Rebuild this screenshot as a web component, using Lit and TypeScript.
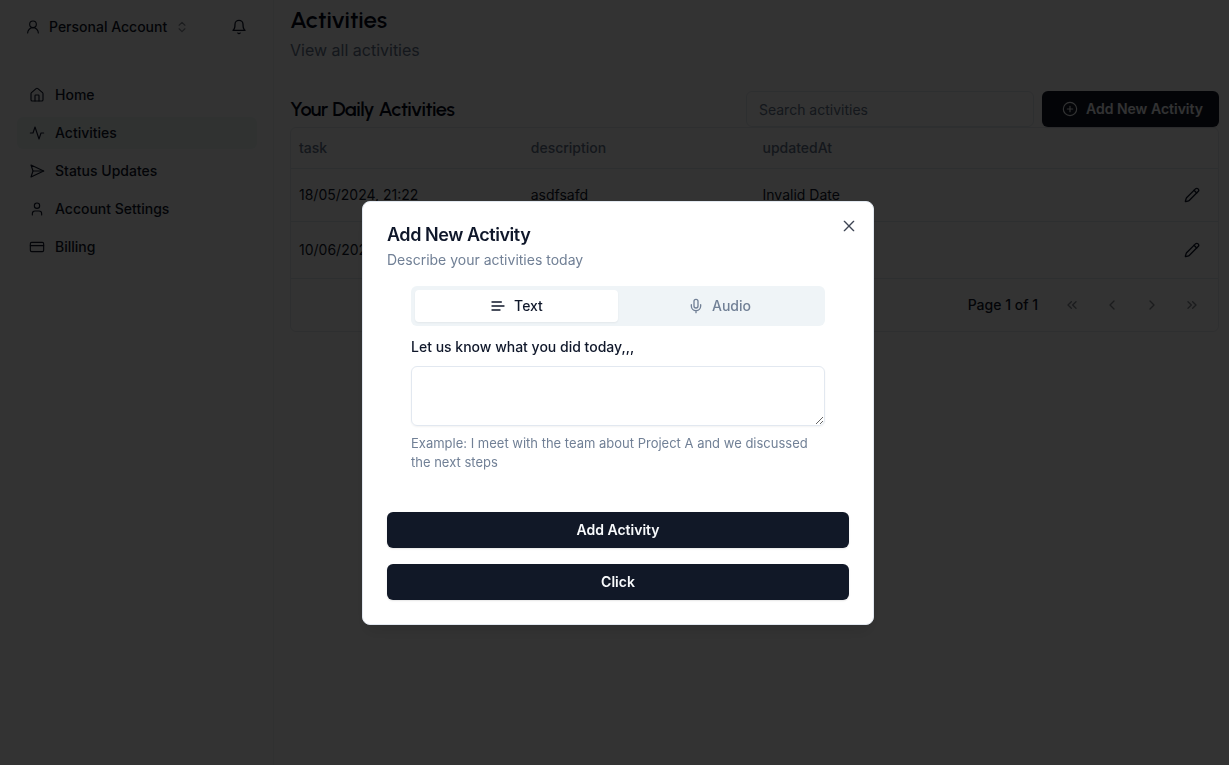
import { LitElement, html, css, svg } from "lit";
import { customElement, state } from "lit/decorators.js";

const icons = {
  account: svg`<circle cx="12" cy="8" r="5"/><path d="M20 21a8 8 0 0 0-16 0"/>`,
  sort: svg`<path d="m7 9 5-5 5 5M7 15l5 5 5-5"/>`,
  bell: svg`<path d="M6 8a6 6 0 0 1 12 0c0 7 3 9 3 9H3s3-2 3-9"/><path d="M10.3 21a1.94 1.94 0 0 0 3.4 0"/>`,
  home: svg`<path d="M15 21v-8a1 1 0 0 0-1-1h-4a1 1 0 0 0-1 1v8"/><path d="M3 10a2 2 0 0 1 .709-1.528l7-5.999a2 2 0 0 1 2.582 0l7 5.999A2 2 0 0 1 21 10v9a2 2 0 0 1-2 2H5a2 2 0 0 1-2-2z"/>`,
  activity: svg`<path d="M22 12h-4l-3 9L9 3l-3 9H2"/>`,
  send: svg`<path d="m3 3 3 9-3 9 19-9Z"/><path d="M6 12h16"/>`,
  user: svg`<path d="M19 21v-2a4 4 0 0 0-4-4H9a4 4 0 0 0-4 4v2"/><circle cx="12" cy="7" r="4"/>`,
  card: svg`<rect width="20" height="14" x="2" y="5" rx="2"/><path d="M2 10h20"/>`,
  plus: svg`<circle cx="12" cy="12" r="10"/><path d="M8 12h8M12 8v8"/>`,
  pencil: svg`<path d="M21.174 6.812a1 1 0 0 0-3.986-3.987L3.842 16.174a2 2 0 0 0-.5.830l-1.321 4.352a.5.5 0 0 0 .623.622l4.353-1.320a2 2 0 0 0 .830-.497z"/><path d="m15 5 4 4"/>`,
  first: svg`<path d="m11 17-5-5 5-5M18 17l-5-5 5-5"/>`,
  prev: svg`<path d="m15 18-6-6 6-6"/>`,
  next: svg`<path d="m9 18 6-6-6-6"/>`,
  last: svg`<path d="m6 17 5-5-5-5M13 17l5-5-5-5"/>`,
  close: svg`<path d="m5 5 14 14M19 5 5 19"/>`,
  text: svg`<path d="M17 6H3M21 12H3M15 18H3"/>`,
  mic: svg`<path d="M12 2a3 3 0 0 0-3 3v7a3 3 0 0 0 6 0V5a3 3 0 0 0-3-3Z"/><path d="M19 10v2a7 7 0 0 1-14 0v-2M12 19v3"/>`,
};

type IconName = keyof typeof icons;

const icon = (name: IconName, extra = "") => html`<svg
  class="icon ${extra}" viewBox="0 0 24 24" aria-hidden="true">${icons[name]}</svg>`;

const base = css`
  *, *::before, *::after { box-sizing: border-box; }
  h1, h2, h3, p { margin: 0; }
  button, input, textarea { font: inherit; color: inherit; margin: 0; }
  button { display: inline-flex; align-items: center; border: 0; background: none; padding: 0; cursor: pointer; }
  .icon {
    width: 16px; height: 16px; flex: none;
    fill: none; stroke: currentColor; stroke-width: 2;
    stroke-linecap: round; stroke-linejoin: round;
  }
  .thin { stroke-width: 1.7; }
  .primary {
    display: flex; align-items: center; justify-content: center;
    height: 36px; padding: 0 16px; border-radius: 6px;
    background: #111827; color: #f8fafc; font-weight: 600;
    box-shadow: 0 1px 2px rgba(0, 0, 0, 0.1);
  }
`;

@customElement("app-sidebar")
export class AppSidebar extends LitElement {
  static styles = [base, css`
    :host { display: block; border-right: 1px solid #f1f3f6; padding: 9px 16px 0 17px; font-weight: 500; }
    .top { display: flex; align-items: center; justify-content: space-between; height: 36px; padding: 0 10px 0 8px; }
    .account { gap: 8px; }
    .muted { opacity: 0.5; width: 14px; height: 14px; }
    .nav { display: flex; flex-direction: column; gap: 6px; margin-top: 34px; }
    .link {
      display: flex; align-items: center; gap: 10px; height: 32px; padding: 0 12px;
      border-radius: 6px; color: inherit; text-decoration: none;
    }
    .active { background: #f0f7f6; }
  `];

  links: { label: string; icon: IconName }[] = [
    { label: "Home", icon: "home" },
    { label: "Activities", icon: "activity" },
    { label: "Status Updates", icon: "send" },
    { label: "Account Settings", icon: "user" },
    { label: "Billing", icon: "card" },
  ];

  render() {
    return html`
      <div class="top">
        <button class="account">${icon("account", "thin")}<span>Personal Account</span>${icon("sort", "muted")}</button>
        <button aria-label="Notifications">${icon("bell")}</button>
      </div>
      <nav class="nav">
        ${this.links.map((l) => html`<a href="#" class="link ${l.label === "Activities" ? "active" : ""}">
          ${icon(l.icon, "thin")}<span>${l.label}</span></a>`)}
      </nav>`;
  }
}

@customElement("activities-page")
export class ActivitiesPage extends LitElement {
  static styles = [base, css`
    :host { display: block; padding: 6px 10px 0 16px; min-width: 0; }
    .title { font: 600 24px/28px "Urbanist", "Lato", sans-serif; color: #020617; }
    .sub { font-size: 16px; line-height: 24px; margin-top: 4px; color: #64748b; }
    .bar { display: flex; align-items: center; gap: 8px; margin-top: 29px; }
    .heading { flex: 1; font: 600 20px/28px "Urbanist", "Lato", sans-serif; letter-spacing: -0.025em; color: #020617; }
    .search {
      width: 288px; height: 36px; padding: 0 12px; border: 1px solid #e2e8f0;
      border-radius: 6px; background: none;
    }
    .search::placeholder { color: #64748b; opacity: 1; }
    .add { gap: 8px; padding-left: 20px; }
    .frame { border: 1px solid #e6eaf0; border-radius: 6px; }
    .table { width: 100%; table-layout: fixed; border-collapse: collapse; }
    .table th, .table td { padding: 0 8px; text-align: left; border-bottom: 1px solid #e2e8f0; }
    .table th { height: 40px; font-weight: 500; color: #64748b; }
    .table td { height: 53px; }
    .table tbody tr:last-child td { height: 57px; }
    .table .actions { padding-right: 18px; }
    .edit { display: flex; margin-left: auto; }
    .pager { display: flex; align-items: center; justify-content: flex-end; gap: 24px; height: 52px; padding-right: 18px; }
    .page { font-weight: 500; margin-right: 2px; }
    .step { opacity: 0.5; }
  `];

  rows = [
    { task: "18/05/2024, 21:22", description: "asdfsafd", updatedAt: "Invalid Date" },
    { task: "10/06/2024", description: "", updatedAt: "" },
  ];

  render() {
    return html`
      <h1 class="title">Activities</h1>
      <p class="sub">View all activities</p>
      <div class="bar">
        <h2 class="heading">Your Daily Activities</h2>
        <input class="search" type="search" aria-label="Search activities" placeholder="Search activities" />
        <button class="primary add">${icon("plus", "thin")}<span>Add New Activity</span></button>
      </div>
      <div class="frame">
        <table class="table">
          <thead>
            <tr><th>task</th><th>description</th><th>updatedAt</th><th aria-label="Actions"></th></tr>
          </thead>
          <tbody>
            ${this.rows.map((r) => html`<tr>
              <td>${r.task}</td><td>${r.description}</td><td>${r.updatedAt}</td>
              <td class="actions"><button class="edit" aria-label="Edit">${icon("pencil")}</button></td>
            </tr>`)}
          </tbody>
        </table>
        <div class="pager">
          <span class="page">Page 1 of 1</span>
          <button class="step" aria-label="First page" disabled>${icon("first")}</button>
          <button class="step" aria-label="Previous page" disabled>${icon("prev")}</button>
          <button class="step" aria-label="Next page" disabled>${icon("next")}</button>
          <button class="step" aria-label="Last page" disabled>${icon("last")}</button>
        </div>
      </div>`;
  }
}

@customElement("activity-dialog")
export class ActivityDialog extends LitElement {
  @state() tab = "text";

  static styles = [base, css`
    :host {
      position: fixed; inset: 0; display: grid; place-items: center;
      padding: 61px 0 0 7px; background: rgba(0, 0, 0, 0.8);
    }
    .dialog {
      position: relative; width: 100%; max-width: 512px; padding: 24px;
      border: 1px solid #e2e8f0; border-radius: 8px; background: #fff;
      box-shadow: 0 10px 15px -3px rgba(0, 0, 0, 0.1);
    }
    .close { position: absolute; top: 16px; right: 16px; opacity: 0.8; }
    .title { font-size: 18px; line-height: 18px; font-weight: 600; letter-spacing: -0.025em; }
    .desc { margin-top: 6px; color: #718096; }
    .form { padding: 16px 24px 40px; }
    .tabs {
      display: grid; grid-template-columns: 1fr 1fr; height: 40px; padding: 4px;
      border-radius: 6px; background: #eff4f7; color: #718096;
    }
    .tab { justify-content: center; gap: 8px; border-radius: 4px; font-weight: 500; }
    .selected { background: #fff; color: #0f172a; box-shadow: 0 1px 2px rgba(0, 0, 0, 0.05); }
    .label { display: block; margin-top: 11px; font-weight: 500; }
    .area {
      display: block; width: 100%; height: 60px; margin-top: 9px; padding: 8px 12px;
      border: 1px solid #e2e8f0; border-radius: 6px; background: none; resize: vertical;
      box-shadow: 0 1px 2px rgba(0, 0, 0, 0.05);
    }
    .hint { margin-top: 8px; font-size: 13px; line-height: 19px; color: #718096; }
    .actions { display: grid; gap: 16px; }
  `];

  render() {
    const tab = (id: string, name: IconName, label: string) => html`<button
      class="tab ${this.tab === id ? "selected" : ""}" role="tab"
      aria-selected=${this.tab === id} @click=${() => (this.tab = id)}>
      ${icon(name)}<span>${label}</span></button>`;
    return html`
      <section class="dialog" role="dialog" aria-modal="true" aria-labelledby="title">
        <h2 class="title" id="title">Add New Activity</h2>
        <p class="desc">Describe your activities today</p>
        <div class="form">
          <div class="tabs" role="tablist">${tab("text", "text", "Text")}${tab("audio", "mic", "Audio")}</div>
          <label class="label" for="entry">Let us know what you did today,,,</label>
          <textarea class="area" id="entry"></textarea>
          <p class="hint">Example: I meet with the team about Project A and we discussed the next steps</p>
        </div>
        <div class="actions">
          <button class="primary">Add Activity</button>
          <button class="primary">Click</button>
        </div>
        <button class="close" aria-label="Close">${icon("close")}</button>
      </section>`;
  }
}

@customElement("app-root")
export class AppRoot extends LitElement {
  static styles = css`
    :host {
      display: grid; grid-template-columns: 274px minmax(0, 1fr); min-height: 100vh;
      background: #fff; color: #0f172a; font: 400 14px/20px Inter, sans-serif;
    }
  `;

  render() {
    return html`
      <app-sidebar></app-sidebar>
      <activities-page></activities-page>
      <activity-dialog></activity-dialog>`;
  }
}
